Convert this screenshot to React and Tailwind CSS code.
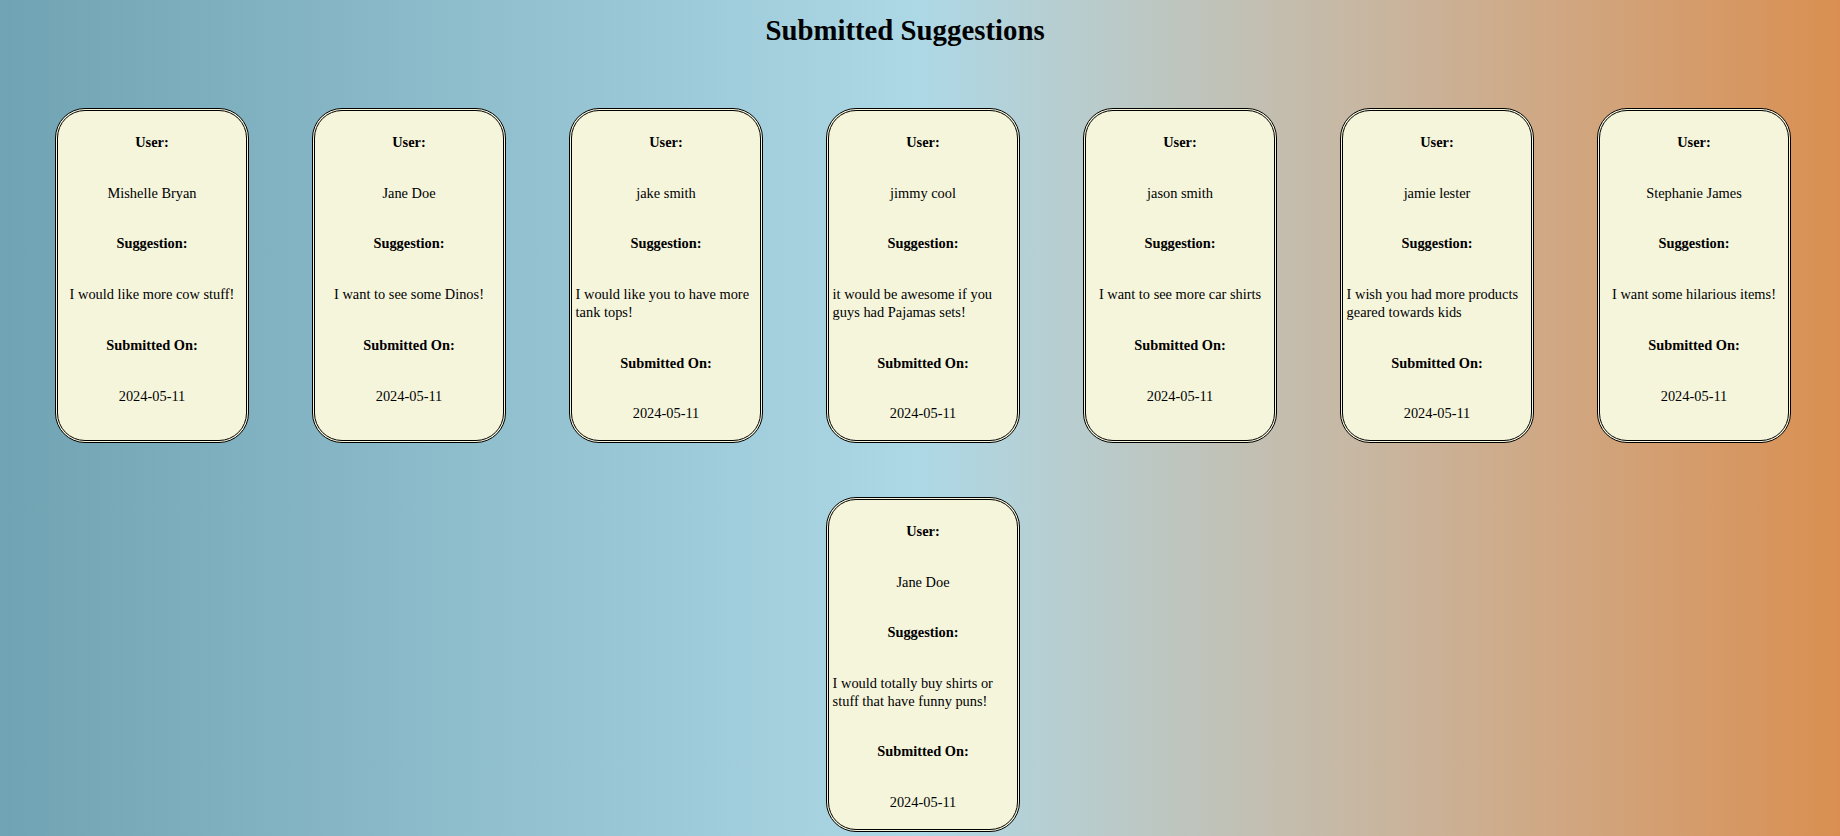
import React from 'react';

const suggestions = [
  { user: 'Mishelle Bryan', text: 'I would like more cow stuff!', date: '2024-05-11' },
  { user: 'Jane Doe', text: 'I want to see some Dinos!', date: '2024-05-11' },
  { user: 'jake smith', text: 'I would like you to have more tank tops!', date: '2024-05-11' },
  { user: 'jimmy cool', text: 'it would be awesome if you guys had Pajamas sets!', date: '2024-05-11' },
  { user: 'jason smith', text: 'I want to see more car shirts', date: '2024-05-11' },
  { user: 'jamie lester', text: 'I wish you had more products geared towards kids', date: '2024-05-11' },
  { user: 'Stephanie James', text: 'I want some hilarious items!', date: '2024-05-11' },
  { user: 'Jane Doe', text: 'I would totally buy shirts or stuff that have funny puns!', date: '2024-05-11' },
];

function SuggestionCard({ item }) {
  return (
    <div className="w-[194px] rounded-[30px] border-[3px] border-double border-black bg-[#f5f5dc] px-[3.6px] pt-[23px] pb-[17px] flex flex-col items-center gap-[33px] text-[14.4px] leading-[17.7px] text-black">
      <p className="font-bold">User:</p>
      <p>{item.user}</p>
      <p className="font-bold">Suggestion:</p>
      <p>{item.text}</p>
      <p className="font-bold">Submitted On:</p>
      <p>{item.date}</p>
    </div>
  );
}

export default function App() {
  return (
    <div className="min-h-screen w-full bg-gradient-to-r from-[#70a3b3] via-[#add8e6] to-[#d98f50] font-['Liberation_Serif',serif] pb-[6px]">
      <h1 className="text-center pr-[30px] pt-[14px] text-[28.8px] leading-[33px] font-bold text-black">
        Submitted Suggestions
      </h1>

      <div className="mt-[61px] pl-[6px] flex flex-wrap justify-center gap-x-[63px] gap-y-[54px]">
        {suggestions.map((s, i) => (
          <SuggestionCard key={i} item={s} />
        ))}
      </div>
    </div>
  );
}
